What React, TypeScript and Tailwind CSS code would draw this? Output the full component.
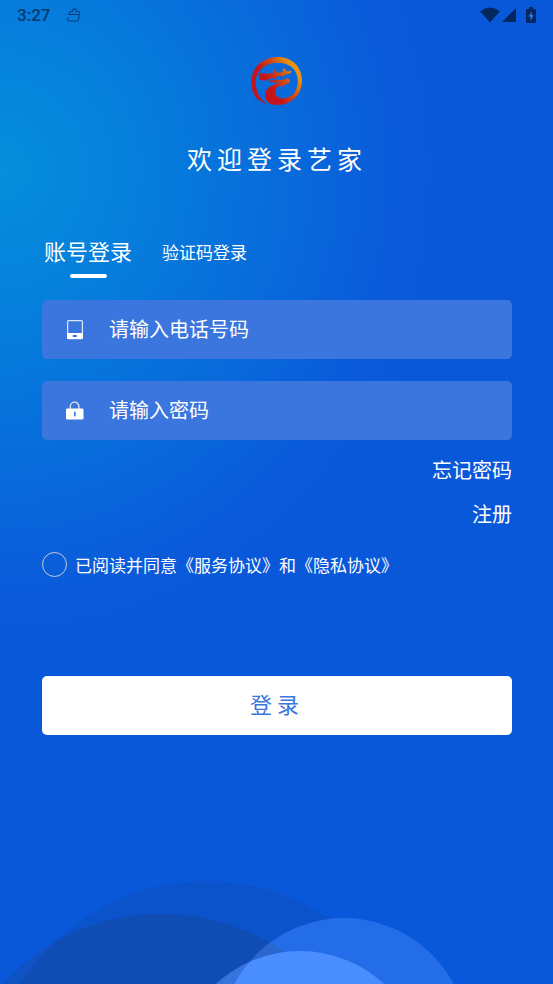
/**
 * Login — account / verification-code sign-in screen.
 */

import { useState } from 'react';

type LoginMode = 'account' | 'code';

interface FieldProps {
  id: string;
  type: string;
  label: string;
  icon: React.ReactNode;
}

const TABS: { mode: LoginMode; label: string }[] = [
  { mode: 'account', label: '账号登录' },
  { mode: 'code', label: '验证码登录' },
];

function StatusBar() {
  return (
    <header className="flex h-[30px] items-center justify-between px-[17px] text-[#04386f]">
      <div className="flex items-center gap-4">
        <time className="font-['Roboto',sans-serif] text-[17px] leading-5 font-medium">3:27</time>
        <svg className="h-4 w-4" viewBox="0 0 16 16" fill="none" stroke="currentColor" aria-hidden="true">
          <path d="M2.500 7.500 4 4.500h2.500L7 2h3v2.500h2.500q1 0 1 1L12.500 12.500q0 1.500-1.500 1.500H2.500Q.7 14 1.200 12.500L2.500 10.500M3 7.500h9.500" />
        </svg>
      </div>
      <div className="flex items-center text-[#03275f]">
        <svg className="h-4 w-5" viewBox="0 0 20 16" fill="currentColor" aria-hidden="true">
          <path d="M0 4.200Q10-3 20 4.200L10 15.500z" />
        </svg>
        <svg className="ml-[2px] h-4 w-[14px]" viewBox="0 0 14 16" fill="currentColor" aria-hidden="true">
          <path d="M14 1v14H0z" />
        </svg>
        <svg className="ml-[10px] h-4 w-[10px]" viewBox="0 0 10 16" aria-hidden="true">
          <path d="M3 0h4v2h2q1 0 1 1v12q0 1-1 1H1q-1 0-1-1V3q0-1 1-1h2z" fill="currentColor" />
          <path d="M6 4 2.500 9.500h2V14l3.300-6H5.500z" fill="#2a78e8" />
        </svg>
      </div>
    </header>
  );
}

function Logo() {
  return (
    <svg className="h-[66px] w-[72px]" viewBox="0 0 216 198" role="img" aria-label="艺家">
      <defs>
        <linearGradient id="logo-ink" gradientUnits="userSpaceOnUse" x1="86" y1="108" x2="156" y2="62">
          <stop offset="0" stopColor="#c5151a" />
          <stop offset="0.5" stopColor="#d04a16" />
          <stop offset="1" stopColor="#e8930f" />
        </linearGradient>
      </defs>
      <g fill="url(#logo-ink)">
        <path d="M80 170C49 159 30 131 31 98 33 56 67 27 111 27c42 0 71 29 72 69 0 22-8 42-22 55-14 13-31 20-52 20-22 0-36-10-37-27-1-15 9-27 25-34l17-6-19-1-18-5 26-2 24-1 12-4 9 5-4 9-13 5-5 7-5-5c-12 4-18 11-18 21 0 12 9 19 24 18 17-1 31-10 37-24 5-9 6-19 6-31 0-32-24-52-60-52-37 0-66 24-66 59 0 28 14 53 36 67z" />
        <path d="m53 74 20 3 24-2-2-8 7-2 6 9 17-2-1-8 7-3 5 9 16-1-3 7-17 4-5 6-6-3-15 4-5 7-6-4-11 3-12 5-15-2-3-9z" />
        <path d="m31 123 9 3 4 14-5-2zm7 18 8 1 9 14-7-4z" />
      </g>
    </svg>
  );
}

function PhoneIcon() {
  return (
    <svg className="h-5 w-5" viewBox="0 0 20 20" aria-hidden="true">
      <rect x="2.600" y="0.600" width="14.800" height="18" rx="1" fill="none" stroke="#dce7fb" strokeWidth="1.200" />
      <path d="M2 13h16v5q0 1-1 1H3q-1 0-1-1z" fill="#fff" />
      <rect x="7.500" y="15" width="4.500" height="2" rx="1" fill="#3a76dd" />
    </svg>
  );
}

function LockIcon() {
  return (
    <svg className="h-5 w-5" viewBox="0 0 20 20" aria-hidden="true">
      <path d="M5.300 9V5.500a4.300 4.300 0 0 1 8.600 0V9" fill="none" stroke="#dce7fb" strokeWidth="1.300" />
      <rect x="1" y="7.500" width="17.500" height="11" rx="1.200" fill="#fff" />
      <rect x="9" y="10.500" width="1.600" height="5" rx="0.800" fill="#3a76dd" />
    </svg>
  );
}

function Field({ id, type, label, icon }: FieldProps) {
  return (
    <div className="flex h-[59px] items-center rounded-[5px] bg-[#3a76dd] pl-[23px]">
      <label htmlFor={id} aria-label={label}>
        {icon}
      </label>
      <input
        id={id}
        type={type}
        placeholder={label}
        className="ml-6 h-full min-w-0 flex-1 bg-transparent pr-4 pb-[2px] text-[20px] text-white outline-none placeholder:text-white"
      />
    </div>
  );
}

/** Overlapping discs along the bottom edge, dark pair behind the light pair. */
function Waves() {
  return (
    <svg className="absolute bottom-0 left-0 w-full" viewBox="0 0 553 104" aria-hidden="true">
      <defs>
        <clipPath id="disc-dark">
          <circle cx="162" cy="251" r="217" />
        </clipPath>
        <clipPath id="disc-back">
          <circle cx="206" cy="219" r="218" />
        </clipPath>
        <clipPath id="disc-light">
          <circle cx="344" cy="162" r="124" />
        </clipPath>
      </defs>
      <circle cx="206" cy="219" r="218" fill="#0b53cb" />
      <circle cx="162" cy="251" r="217" fill="#0f52c4" />
      <circle cx="162" cy="251" r="217" fill="#0f4cb3" clipPath="url(#disc-back)" />
      <circle cx="344" cy="162" r="124" fill="#236de8" />
      <circle cx="344" cy="162" r="124" fill="#2b66cc" clipPath="url(#disc-dark)" />
      <circle cx="300" cy="195" r="124" fill="#3673dc" />
      <circle cx="300" cy="195" r="124" fill="#4a8dff" clipPath="url(#disc-light)" />
    </svg>
  );
}

export default function App() {
  const [mode, setMode] = useState<LoginMode>('account');

  return (
    <div className="relative min-h-screen overflow-hidden bg-[#0a58da] bg-[radial-gradient(ellipse_450px_480px_at_0px_170px,#058fdc_0%,#0580dc_28%,#086adb_64%,#0a5bda_88%,#0a58da_100%)] font-['Noto_Sans_CJK_SC',sans-serif] text-white">
      <Waves />
      <div className="relative">
        <StatusBar />

        <main className="pr-[41px] pl-[42px]">
          <div className="flex flex-col items-center pt-[18px]">
            <Logo />
            <h1 className="mt-[26px] text-[25px] leading-9 tracking-[5px]">欢迎登录艺家</h1>
          </div>

          <div role="tablist" className="mt-[58px] flex items-start gap-[30px] pl-[2px]">
            {TABS.map((tab) => (
              <button
                key={tab.mode}
                type="button"
                role="tab"
                aria-selected={mode === tab.mode}
                onClick={() => setMode(tab.mode)}
                className="flex flex-col items-center"
              >
                <span
                  className={mode === tab.mode ? 'text-[22px] leading-8' : 'pt-1 text-[17px] leading-7'}
                >
                  {tab.label}
                </span>
                {mode === tab.mode && <span className="mt-2 h-1 w-[37px] rounded-full bg-white" />}
              </button>
            ))}
          </div>

          <form onSubmit={(event) => event.preventDefault()}>
            <div className="mt-[22px] flex flex-col gap-[22px]">
              <Field id="phone" type="tel" label="请输入电话号码" icon={<PhoneIcon />} />
              <Field id="password" type="password" label="请输入密码" icon={<LockIcon />} />
            </div>

            <nav className="mt-4 flex flex-col items-end gap-4 text-[20px] leading-7">
              <a href="#forgot">忘记密码</a>
              <a href="#register">注册</a>
            </nav>

            <div className="mt-6 flex items-center gap-2 text-[17px] leading-6">
              <input
                id="agree"
                type="checkbox"
                className="h-[25px] w-[25px] shrink-0 appearance-none rounded-full border border-[#c5cad6] checked:bg-white"
              />
              <label htmlFor="agree">
                已阅读并同意<a href="#terms">《服务协议》</a>和<a href="#privacy">《隐私协议》</a>
              </label>
            </div>

            <button
              type="submit"
              className="mt-[99px] h-[59px] w-full rounded-[5px] bg-white pb-1 text-[22px] tracking-[5px] text-[#3a76dd]"
            >
              登录
            </button>
          </form>
        </main>
      </div>
    </div>
  );
}
